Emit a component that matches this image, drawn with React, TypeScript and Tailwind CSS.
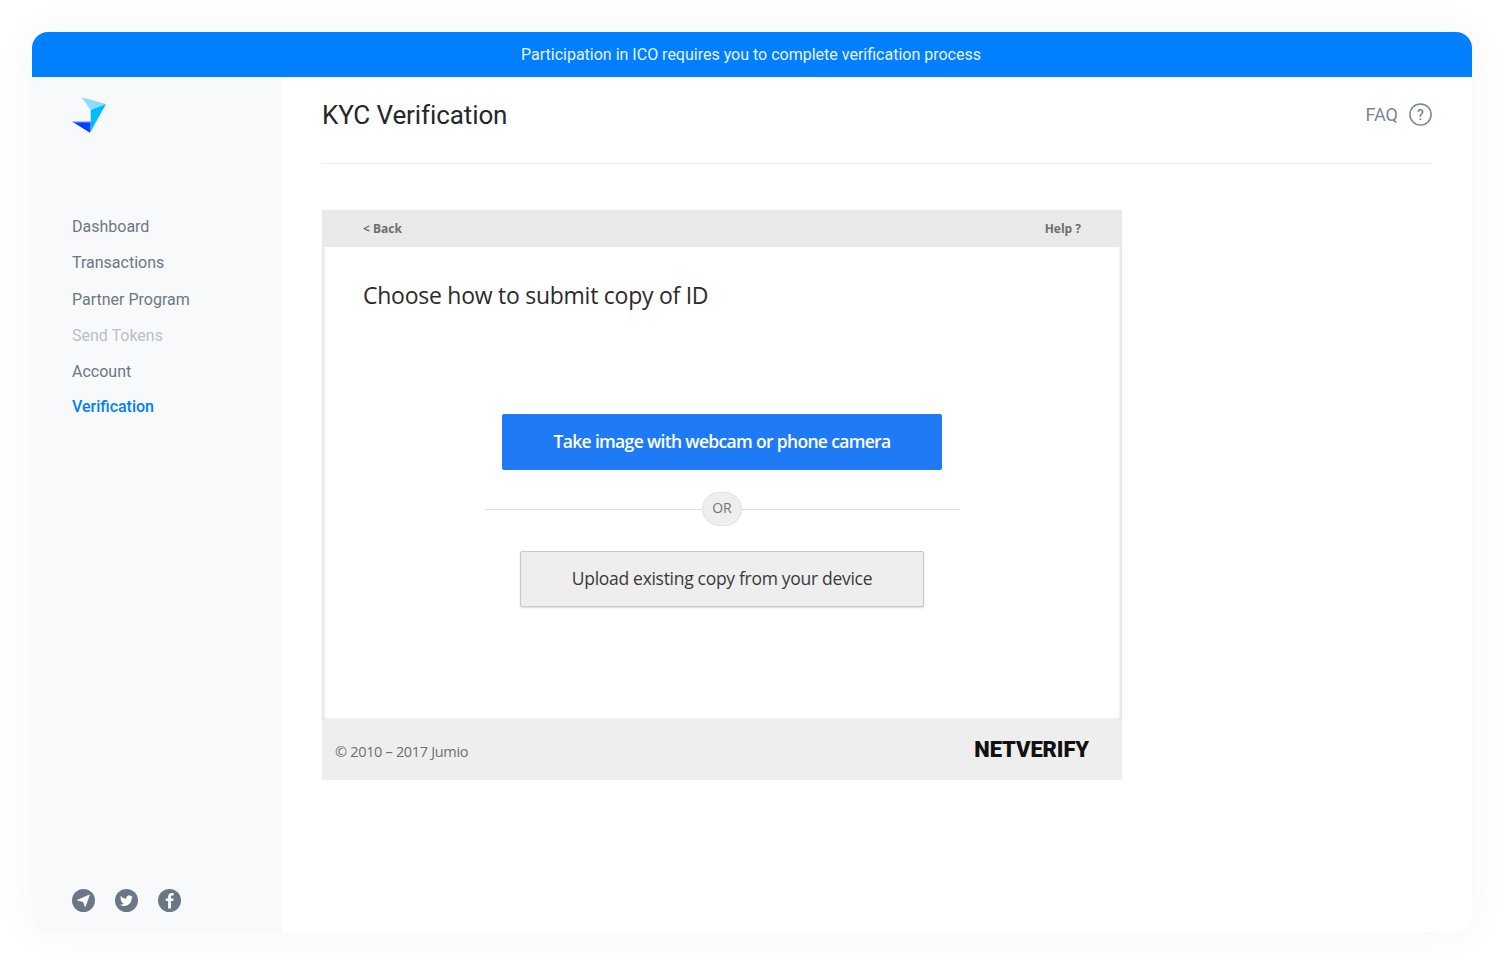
import React from "react";

const nav = [
  { label: "Dashboard", cls: "text-[#6d7785]" },
  { label: "Transactions", cls: "text-[#6d7785]" },
  { label: "Partner Program", cls: "text-[#6d7785]" },
  { label: "Send Tokens", cls: "text-[#b9bfc7]" },
  { label: "Account", cls: "text-[#6d7785]" },
];

function Logo() {
  return (
    <svg width="36" height="38" viewBox="0 0 36 38" className="block">
      <polygon points="9.5,0.3 34,7 18.7,13" fill="#8ddcff" />
      <polygon points="34,7 18.7,13 18.7,24.7 18,35.8" fill="#00bbff" />
      <polygon points="0.3,24.7 18.7,24.7 18,35.8" fill="#0044ff" />
      <polygon points="0.3,24.7 18.7,24.7 18.7,25.6 1.8,25.6" fill="#6f9dff" />
    </svg>
  );
}

function Telegram() {
  return (
    <svg width="23" height="23" viewBox="0 0 23 23" className="block">
      <circle cx="11.5" cy="11.5" r="11.5" fill="#6b7786" />
      <path d="M5.5 11.2 L17.3 6 L13.2 17.6 L11.3 12.6 Z" fill="#fff" stroke="#fff" strokeWidth="0.8" strokeLinejoin="round" />
    </svg>
  );
}

function Twitter() {
  return (
    <svg width="23" height="23" viewBox="0 0 23 23" className="block">
      <circle cx="11.5" cy="11.5" r="11.5" fill="#6b7786" />
      <g transform="translate(5 5.2) scale(0.54)">
        <path
          fill="#fff"
          d="M23.95 4.57a10 10 0 0 1-2.82.77 4.96 4.96 0 0 0 2.16-2.72c-.95.55-2 .95-3.12 1.18a4.92 4.92 0 0 0-8.38 4.48C7.69 8.1 4.07 6.13 1.64 3.16a4.82 4.82 0 0 0-.67 2.48c0 1.71.87 3.21 2.19 4.1a4.9 4.9 0 0 1-2.23-.62v.06a4.92 4.92 0 0 0 3.95 4.83 5 5 0 0 1-2.21.08 4.94 4.94 0 0 0 4.6 3.42 9.87 9.87 0 0 1-6.1 2.1c-.39 0-.78-.02-1.17-.07a13.9 13.9 0 0 0 7.55 2.21c9.05 0 14-7.5 14-13.98 0-.21 0-.42-.01-.63a10 10 0 0 0 2.41-2.57z"
        />
      </g>
    </svg>
  );
}

function Facebook() {
  return (
    <svg width="23" height="23" viewBox="0 0 23 23" className="block">
      <circle cx="11.5" cy="11.5" r="11.5" fill="#6b7786" />
      <path
        fill="#fff"
        d="M12.9 19.5v-7.4h2.3l.35-2.7H12.9V7.8c0-.8.25-1.3 1.35-1.3h1.4V4.1c-.25 0-1.1-.1-2.05-.1-2.05 0-3.45 1.25-3.45 3.5v1.9H7.8v2.7h2.35v7.4z"
      />
    </svg>
  );
}

export default function App() {
  return (
    <div className="min-h-[964px] bg-white p-8 font-['Roboto',sans-serif]">
      <div className="flex h-[900px] w-[1440px] flex-col overflow-hidden rounded-2xl bg-white shadow-[0_0_40px_rgba(40,50,70,0.05)]">
        <div className="flex h-[45px] shrink-0 items-center justify-center bg-[#007fff] text-[16px] text-[#e8f3ff]">
          <span className="mr-[2px] pt-[1px]">Participation in ICO requires you to complete verification process</span>
        </div>
        <div className="flex min-h-0 flex-1">
          <aside className="flex w-[250px] shrink-0 flex-col justify-between bg-[#f8f9fb] pb-[20px] pl-10 pt-5">
            <div>
              <Logo />
              <nav className="mt-[74px] flex flex-col text-[16px]">
                {nav.map((n) => (
                  <a key={n.label} className={`block h-[36.25px] leading-[36.25px] ${n.cls}`}>
                    {n.label}
                  </a>
                ))}
                <a className="block h-[36px] leading-[34px] font-medium text-[#007fff]">Verification</a>
              </nav>
            </div>
            <div className="flex gap-5">
              <Telegram />
              <Twitter />
              <Facebook />
            </div>
          </aside>
          <main className="min-w-0 flex-1 px-10">
            <header className="flex h-[87px] items-center justify-between border-b border-[#e8e9eb] pb-[11px]">
              <h1 className="pt-[2px] text-[26px] font-normal tracking-[-0.1px] text-[#23272c]">KYC Verification</h1>
              <div className="flex items-center gap-[11px] text-[18px] text-[#7a8594]">
                <span>FAQ</span>
                <svg width="23" height="23" viewBox="0 0 23 23" className="block">
                  <circle cx="11.5" cy="11.5" r="10.6" fill="none" stroke="#7a8594" strokeWidth="1.5" />
                  <text x="11.5" y="16.5" textAnchor="middle" fontSize="14" fontWeight="500" fill="#7a8594" fontFamily="Roboto, sans-serif">?</text>
                </svg>
              </div>
            </header>
            <section className="mt-[46px] flex h-[570px] w-[800px] flex-col overflow-hidden rounded-[2px] bg-[#eeeeee] font-['Open_Sans',sans-serif] shadow-[0_0_1px_rgba(0,0,0,0.15)]">
              <div className="flex h-[37px] shrink-0 items-center justify-between bg-[#e9e9e9] pl-[41px] pr-[41px] text-[12px] font-bold text-[#6e6e6e]">
                <span>&lt; Back</span>
                <span>Help ?</span>
              </div>
              <div className="flex min-h-0 flex-1 flex-col items-center bg-white shadow-[inset_4px_0_3px_-2px_rgba(0,0,0,0.12),inset_-4px_0_3px_-2px_rgba(0,0,0,0.12),inset_0_-2px_2px_-1px_rgba(0,0,0,0.06)]">
                <h2 className="w-full pl-[41px] pt-[31px] text-[23px] font-normal leading-[34px] tracking-[-0.26px] text-[#2b2b2b]">
                  Choose how to submit copy of ID
                </h2>
                <button className="mt-[102px] h-[56px] w-[440px] rounded-[2px] bg-[#1f7bf5] pb-[1px] text-[17.5px] font-semibold tracking-[-0.67px] text-white">
                  Take image with webcam or phone camera
                </button>
                <div className="relative mt-[22px] flex h-[34px] w-[474px] items-center justify-center">
                  <div className="h-px w-full bg-[#dcdcdc]" />
                  <span className="absolute left-[217px] top-0 flex h-[34px] w-[40px] items-center justify-center rounded-full border border-[#e3e3e3] bg-[#eeeeee] pb-[3px] text-[14px] text-[#757575]">
                    OR
                  </span>
                </div>
                <button className="mt-[25px] h-[56px] w-[404px] rounded-[2px] border border-[#c8c8c8] bg-[#eeeeee] pb-[1px] text-[17.5px] tracking-[-0.3px] text-[#3a3a3a] shadow-[0_1px_2px_rgba(0,0,0,0.15)]">
                  Upload existing copy from your device
                </button>
              </div>
              <div className="flex h-[61px] shrink-0 items-center justify-between pl-[13px] pr-[33px] text-[14.5px] text-[#6e6e6e]">
                <span className="pt-[4px] tracking-[-0.32px]">© 2010 – 2017 Jumio</span>
                <span className="font-['Roboto',sans-serif] text-[22px] font-black leading-none tracking-[-0.12px] text-[#111111]">NETVERIFY</span>
              </div>
            </section>
          </main>
        </div>
      </div>
    </div>
  );
}
